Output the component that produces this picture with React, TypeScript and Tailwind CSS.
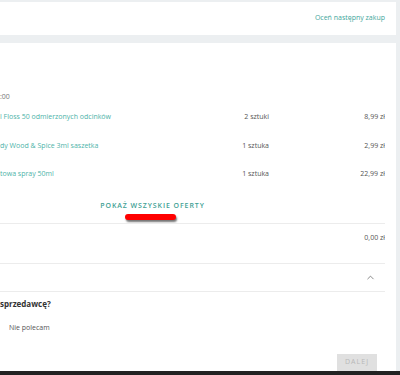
import { ChevronUp } from 'lucide-react'

const items = [
  { name: 'l Floss 50 odmierzonych odcinków', qty: '2 sztuki', price: '8,99 zł' },
  { name: 'dy Wood & Spice 3ml saszetka', qty: '1 sztuka', price: '2,99 zł' },
  { name: 'towa spray 50ml', qty: '1 sztuka', price: '22,99 zł' },
]

export default function App() {
  return (
    <div
      className="w-[400px] h-[375px] bg-[#eceff1] overflow-hidden flex flex-col pt-[2px]"
      style={{ fontFamily: '"Open Sans", "Noto Sans", sans-serif' }}
    >
      {/* Top card */}
      <div className="h-[33px] shrink-0 bg-white mr-[4px] flex items-center justify-end pr-[11px]">
        <span className="text-[7px] text-[#3fa79d]">Oceń następny zakup</span>
      </div>

      {/* Main card */}
      <div className="mt-[8px] flex-1 bg-white mr-[4px] flex flex-col">
        <div className="w-[385px] overflow-hidden flex flex-col flex-1">
          <div className="h-[49px] shrink-0" />
          <div className="h-[10px] flex items-center text-[7px] text-[#777]">:00</div>

          {/* Items */}
          <div className="flex flex-col mt-[1px]">
            {items.map((item) => (
              <div key={item.name} className="h-[28.5px] flex items-center text-[7px]">
                <span className="w-[200px] text-[#4db3a9] whitespace-nowrap">{item.name}</span>
                <span className="w-[69px] text-right text-[#555]">{item.qty}</span>
                <span className="flex-1 text-right text-[#555]">{item.price}</span>
              </div>
            ))}
          </div>

          {/* Show all offers */}
          <div className="w-[305px] flex flex-col items-center mt-[12px]">
            <span className="text-[7px] font-semibold tracking-[0.13em] text-[#3f9f95] leading-[10px]">
              POKAŻ WSZYSKIE OFERTY
            </span>
            <div className="mt-[3px] mr-[4px] w-[51px] h-[6px] rounded-full bg-[#ff0000] shadow-[1px_2px_2px_rgba(0,0,0,0.55)]" />
          </div>

          <div className="mt-[3px] h-px bg-[#ececec]" />
          <div className="h-[39px] flex items-start pt-[9px] justify-end text-[7px] leading-[10px] text-[#555]">
            <span className="whitespace-nowrap">0,00 zł</span>
          </div>
          <div className="h-px bg-[#ececec]" />
          <div className="h-[27px] flex items-center justify-end pr-[9px]">
            <ChevronUp className="w-[11px] h-[11px] text-[#555]" strokeWidth={1.5} />
          </div>
          <div className="h-px bg-[#ececec]" />

          <div className="h-[25px] flex items-center text-[8px] font-bold text-[#333]">sprzedawcę?</div>
          <div className="h-[24px] flex items-center pl-[9px] text-[7px] text-[#555]">Nie polecam</div>

          <div className="flex-1 flex items-end justify-end pr-[8px]">
            <div className="w-[40px] h-[17px] bg-[#e0e0e0] flex items-center justify-center text-[7px] tracking-[0.15em] text-[#b8b8b8]">
              DALEJ
            </div>
          </div>
        </div>
      </div>

      {/* Bottom dark bar */}
      <div className="h-[4px] shrink-0 bg-[#222]" />
    </div>
  )
}
